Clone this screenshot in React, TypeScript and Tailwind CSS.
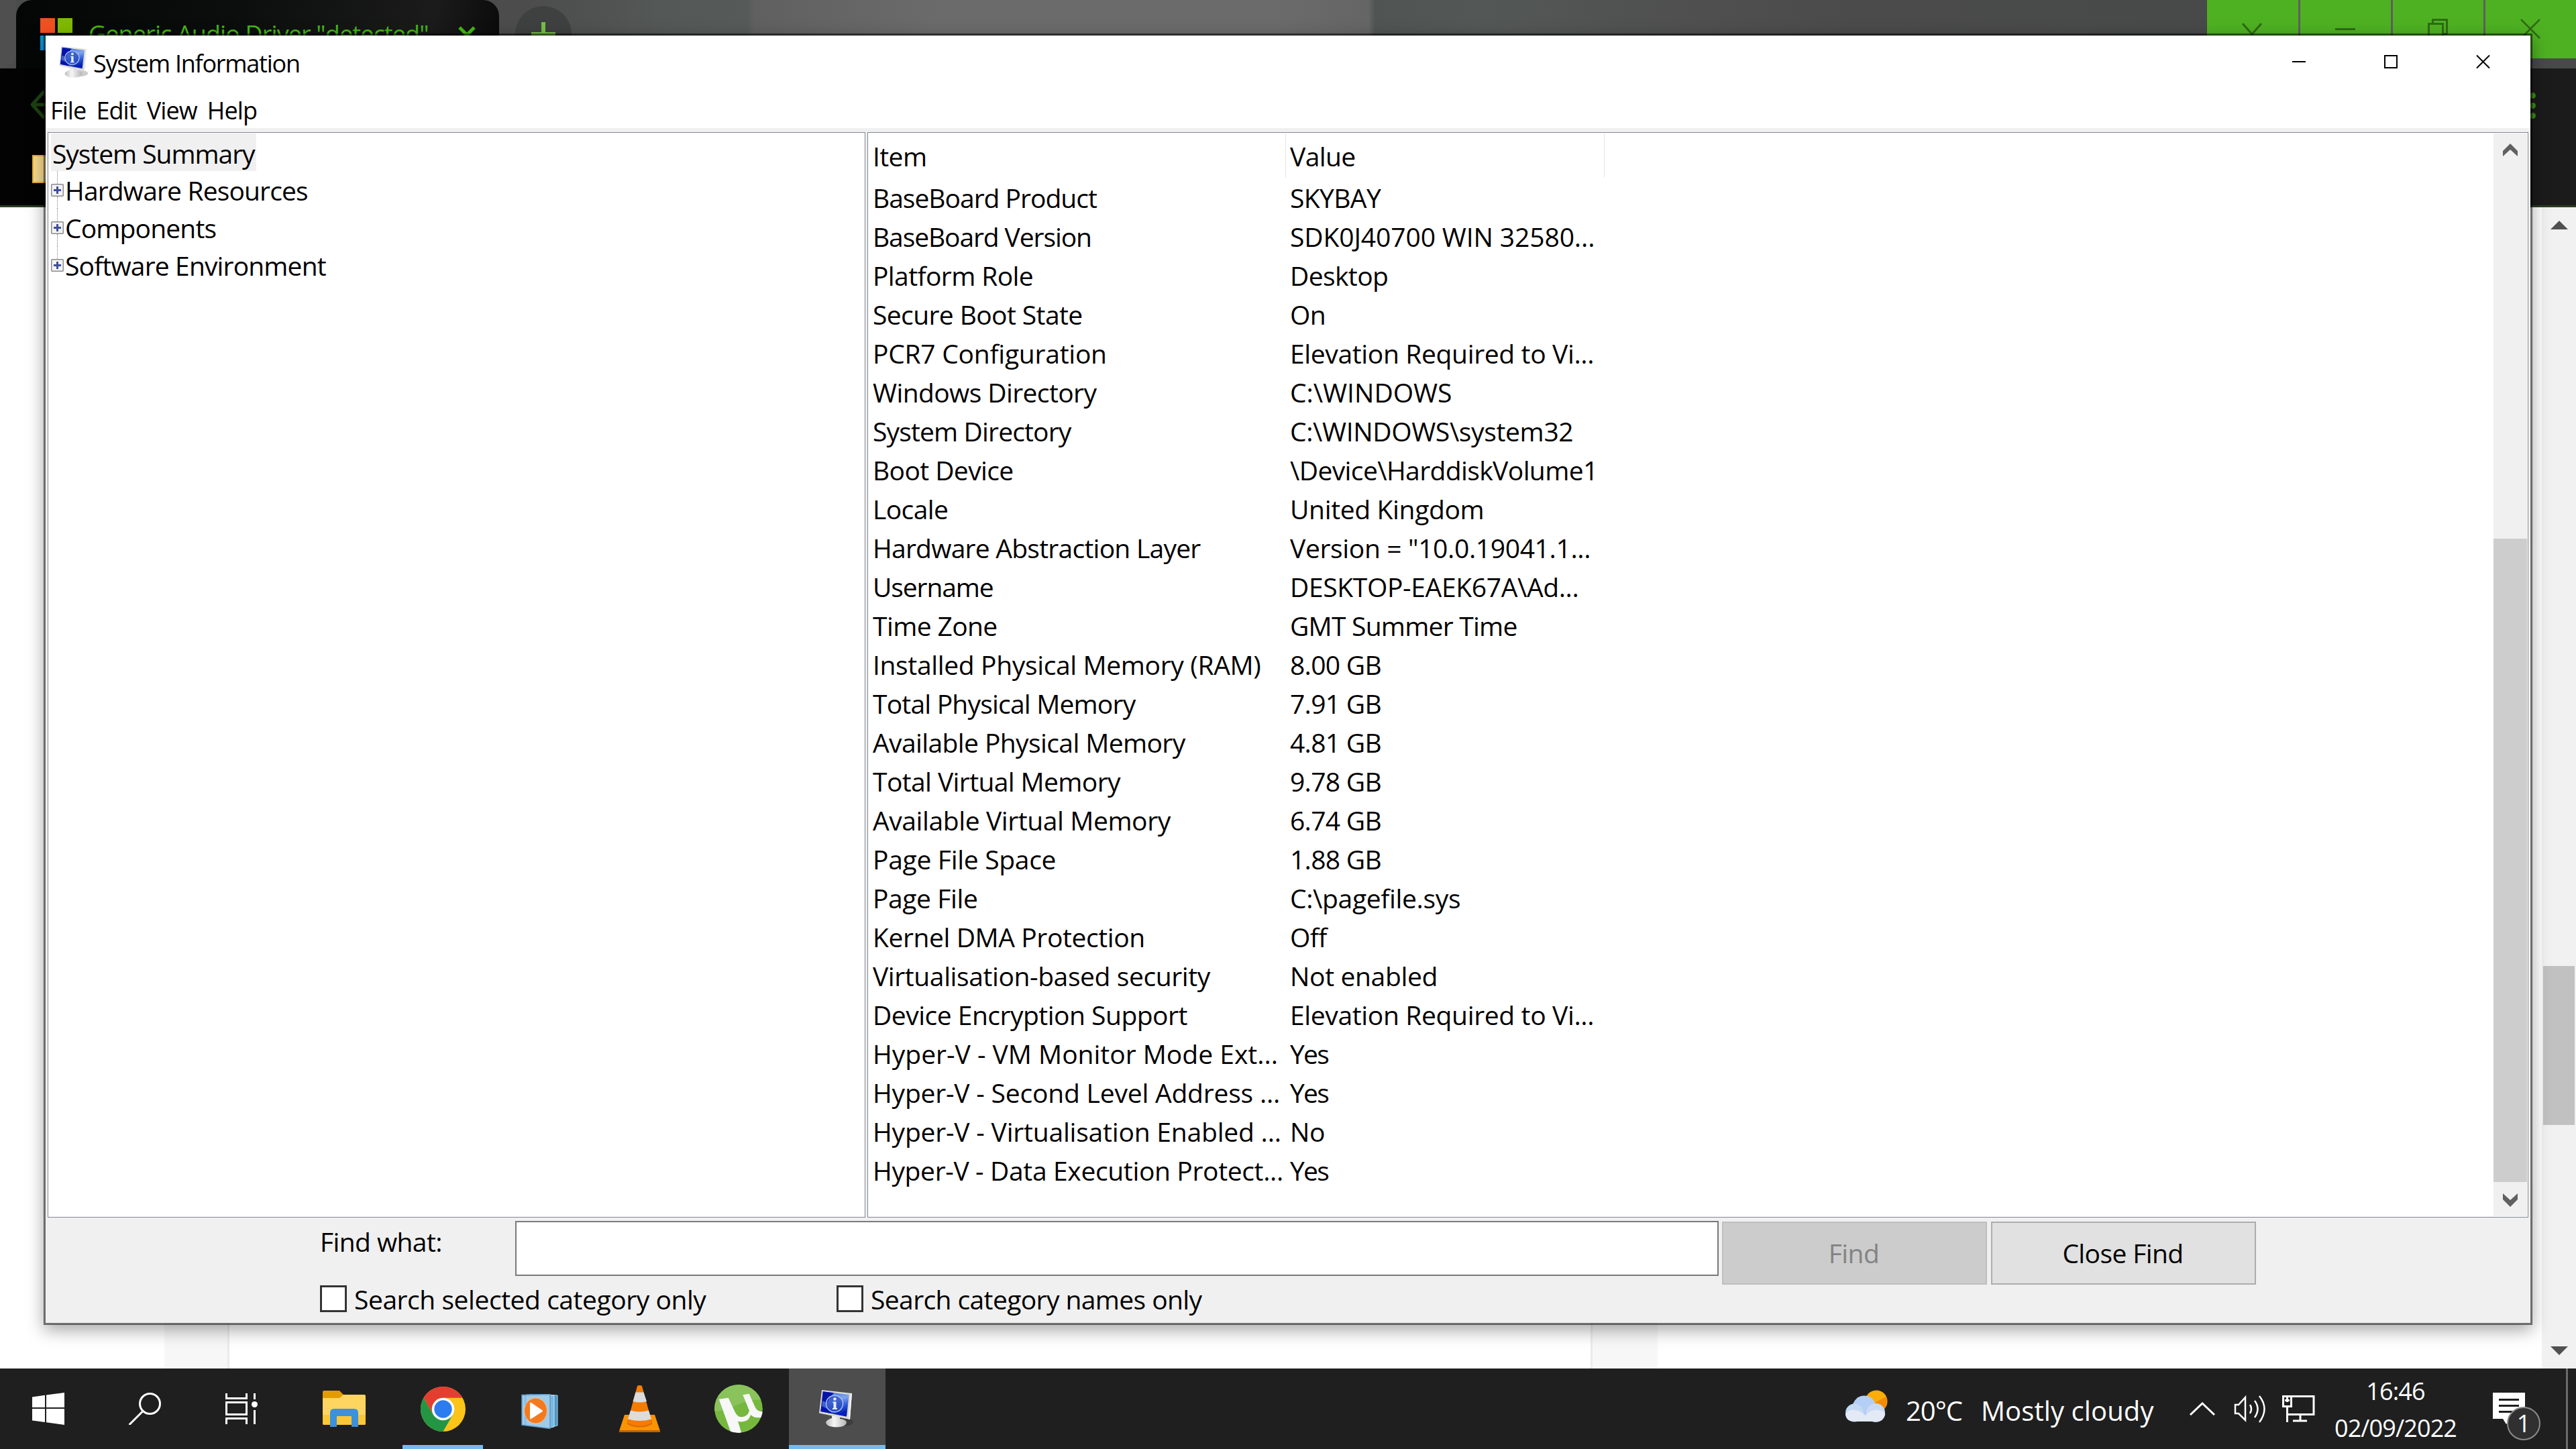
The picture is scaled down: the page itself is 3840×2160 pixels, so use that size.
import type { ReactNode } from 'react';

interface SystemItem {
    name: string;
    value: string;
    nameFit?: string;
    valueFit?: string;
}

const ITEMS: SystemItem[] = [
    { name: 'BaseBoard Product', value: 'SKYBAY', nameFit: 'tracking-[-1px]', valueFit: 'tracking-[-0.6px]' },
    { name: 'BaseBoard Version', value: 'SDK0J40700 WIN 32580...', nameFit: 'tracking-[-1.1px]', valueFit: 'tracking-[-0.1px]' },
    { name: 'Platform Role', value: 'Desktop', valueFit: 'tracking-[-0.6px]' },
    { name: 'Secure Boot State', value: 'On', valueFit: 'tracking-[-0.6px]' },
    { name: 'PCR7 Configuration', value: 'Elevation Required to Vi...', nameFit: 'tracking-[-0.25px]' },
    { name: 'Windows Directory', value: 'C:\\WINDOWS', valueFit: 'tracking-normal' },
    { name: 'System Directory', value: 'C:\\WINDOWS\\system32', nameFit: 'tracking-[-0.85px]' },
    { name: 'Boot Device', value: '\\Device\\HarddiskVolume1', valueFit: 'tracking-[-0.6px]' },
    { name: 'Locale', value: 'United Kingdom' },
    { name: 'Hardware Abstraction Layer', value: 'Version = "10.0.19041.1...', nameFit: 'tracking-[-0.75px]' },
    { name: 'Username', value: 'DESKTOP-EAEK67A\\Ad...', nameFit: 'tracking-[-1.1px]' },
    { name: 'Time Zone', value: 'GMT Summer Time', valueFit: 'tracking-[-0.75px]' },
    { name: 'Installed Physical Memory (RAM)', value: '8.00 GB', nameFit: 'tracking-[-0.35px]', valueFit: 'tracking-[-0.7px]' },
    { name: 'Total Physical Memory', value: '7.91 GB', nameFit: 'tracking-[-0.8px]', valueFit: 'tracking-[-0.7px]' },
    { name: 'Available Physical Memory', value: '4.81 GB', valueFit: 'tracking-[-0.7px]' },
    { name: 'Total Virtual Memory', value: '9.78 GB', valueFit: 'tracking-[-0.7px]' },
    { name: 'Available Virtual Memory', value: '6.74 GB', nameFit: 'tracking-[-0.4px]', valueFit: 'tracking-[-0.7px]' },
    { name: 'Page File Space', value: '1.88 GB', nameFit: 'tracking-[-0.3px]', valueFit: 'tracking-[-0.7px]' },
    { name: 'Page File', value: 'C:\\pagefile.sys', nameFit: 'tracking-[-0.4px]' },
    { name: 'Kernel DMA Protection', value: 'Off', nameFit: 'tracking-[-0.4px]', valueFit: 'tracking-[-0.6px]' },
    { name: 'Virtualisation-based security', value: 'Not enabled', nameFit: 'tracking-[-0.4px]' },
    { name: 'Device Encryption Support', value: 'Elevation Required to Vi...', nameFit: 'tracking-[-0.5px]' },
    { name: 'Hyper-V - VM Monitor Mode Ext...', value: 'Yes', nameFit: 'tracking-normal', valueFit: 'tracking-[-1.7px]' },
    { name: 'Hyper-V - Second Level Address ...', value: 'Yes', nameFit: 'tracking-[-0.2px]', valueFit: 'tracking-[-1.7px]' },
    { name: 'Hyper-V - Virtualisation Enabled ...', value: 'No', nameFit: 'tracking-[-0.2px]' },
    { name: 'Hyper-V - Data Execution Protect...', value: 'Yes', nameFit: 'tracking-[-0.35px]', valueFit: 'tracking-[-1.7px]' },
];

const CATEGORIES = ['Hardware Resources', 'Components', 'Software Environment'];

function SysInfoIcon({ className }: { className: string }) {
    return (
        <svg className={className} viewBox="0 0 52 56" preserveAspectRatio="none">
            <defs>
                <linearGradient id="screen" x1="0" y1="0" x2="0.3" y2="1">
                    <stop offset="0" stopColor="#2a5fd8" />
                    <stop offset="0.45" stopColor="#7fa6ee" />
                    <stop offset="0.7" stopColor="#3560d8" />
                    <stop offset="1" stopColor="#0420b8" />
                </linearGradient>
                <linearGradient id="stand" x1="0" y1="0" x2="1" y2="0">
                    <stop offset="0" stopColor="#bdbdbd" />
                    <stop offset="0.4" stopColor="#f6f6f6" />
                    <stop offset="1" stopColor="#b4b4b4" />
                </linearGradient>
            </defs>
            <ellipse cx="35" cy="48" rx="16" ry="6" fill="#000" opacity="0.2" />
            <path d="M19 37h12v6q10 1 10 6-2 6-15 6.500Q12 55 10 49q0-4 9-7z" fill="url(#stand)" />
            <path d="M4 0L49 5 46 44 0 34.500z" fill="#dddbd8" />
            <path d="M47 5l2 0-3 39-2-.5z" fill="#f4f4f4" />
            <path d="M5.700 2.200L44.700 7 41 39.700 2.300 31.900z" fill="url(#screen)" />
            <path d="M5.700 2.200L22 4.200 15 13 12 21 18 35 2.300 31.900z" fill="#0414a8" />
            <path d="M5 16l9 4-2 8-8-4z" fill="#5a80dc" opacity="0.7" />
            <ellipse cx="23" cy="20.500" rx="12.500" ry="12.200" fill="#2c4fc4" fillOpacity="0.75" stroke="#b3c3ee" strokeWidth="1.400" />
            <circle cx="23.500" cy="13.500" r="2.200" fill="#e6edff" />
            <path d="M20.500 17.500h5V27h1.500v2h-7v-2h1.500v-7.500h-1z" fill="#e6edff" />
        </svg>
    );
}

function Background() {
    return (
        <div className="flex h-[2040px] w-full flex-col bg-white">
            <div className="flex h-[102px] w-full bg-[linear-gradient(90deg,#4c4c4c_0,#4c4c4c_780px,#4f5050_860px,#545957_1000px,#565b59_1115px,#606060_1125px,#6b6b6b_1400px,#6b6b6b_1900px,#656565_2040px,#505452_2050px,#535856_2200px,#4f504f_2500px,#4a4b4a_2750px,#484a49_3290px)]">
                <div className="h-[102px] w-6 rounded-br-[24px] bg-[#4f4f4f]" />
                <div className="flex h-[102px] w-[720px] rounded-t-[24px] bg-[linear-gradient(100deg,#040606,#0c0d0d_45%,#1b1b1b_85%,#0a0a0a)] pl-9 pt-[27px]">
                    <div className="grid h-12 w-12 grid-cols-2 gap-1">
                        <div className="bg-[#f25022]" />
                        <div className="bg-[#7fba00]" />
                        <div className="bg-[#0a94dc]" />
                        <div className="bg-[#ffb900]" />
                    </div>
                    <span className="ml-[24px] mt-[-1px] w-[512px] whitespace-nowrap text-[36px] leading-[50px] tracking-[-0.9px] text-[#42b813]">
                        Generic Audio Driver "detected"
                    </span>
                    <svg className="ml-[39px] mt-[12px] size-[26px]" viewBox="0 0 26 26">
                        <path d="M2 2l22 22M24 2L2 24" stroke="#42b813" strokeWidth="5" />
                    </svg>
                </div>
                <div className="ml-[24px] mt-[9px] flex size-[84px] justify-center rounded-full bg-[#3e413f] pt-[24px]">
                    <svg className="size-9" viewBox="0 0 36 36">
                        <path d="M18 0v36M0 18h36" stroke="#77bf47" strokeWidth="6" />
                    </svg>
                </div>
                <div className="ml-auto flex h-[87px] gap-[3px] bg-[#5f5f5f] text-[#2f6b13]">
                    <div className="h-full w-[136px] bg-[#4eb122]">
                        <svg className="ml-[52px] mt-[34px] h-5 w-[30px]" viewBox="0 0 30 20">
                            <path d="M1 1l14 16L29 1" fill="none" stroke="currentColor" strokeWidth="3" />
                        </svg>
                    </div>
                    <div className="h-full w-[135px] bg-[#4eb122]">
                        <div className="ml-[52px] mt-[42px] h-[3px] w-[30px] bg-[#2f6b13]" />
                    </div>
                    <div className="h-full w-[135px] bg-[#4eb122]">
                        <svg className="ml-[52px] mt-[28px] size-[30px]" viewBox="0 0 30 30">
                            <path d="M1.500 7.500h21v21h-21zM7.500 7.500v-6h21v21h-6" fill="none" stroke="currentColor" strokeWidth="3" />
                        </svg>
                    </div>
                    <div className="h-full w-[135px] bg-[#4eb122]">
                        <svg className="ml-[52px] mt-[28px] size-[30px]" viewBox="0 0 30 30">
                            <path d="M1 1l28 28M29 1L1 29" stroke="currentColor" strokeWidth="2.500" />
                        </svg>
                    </div>
                </div>
            </div>
            <div className="flex h-[207px] w-full justify-between border-b-[3px] border-[#2b3d22] bg-[linear-gradient(90deg,#020302,#020302_40%,#1b1b1b_90%)]">
                <div className="flex flex-col pl-[48px]">
                    <svg className="-ml-[2px] mt-[33px] h-[42px] w-[42px]" viewBox="0 0 42 42">
                        <path d="M20 1L2 21l18 20M2 21h38" fill="none" stroke="#1d4312" strokeWidth="5" />
                    </svg>
                    <div className="mt-[54px] h-[42px] w-12 border-2 border-[#e5b030] bg-[#f9db8f]" />
                </div>
                <div className="mr-[60px] mt-[36px] flex flex-col gap-[6px]">
                    <div className="size-[9px] rounded-full bg-[#3c8a1a]" />
                    <div className="size-[9px] rounded-full bg-[#3c8a1a]" />
                    <div className="size-[9px] rounded-full bg-[#3c8a1a]" />
                </div>
            </div>
            <div className="flex flex-1">
                <div className="ml-[245px] w-[97px] border-r-[3px] border-[#ebebeb] bg-[#f7f7f7]" />
                <div className="w-[2029px]" />
                <div className="w-[100px] border-l-[3px] border-[#ebebeb] bg-[#f7f7f7]" />
                <div className="ml-auto flex w-[51px] flex-col items-center bg-[#f1f1f1] pt-[20px]">
                    <svg className="h-[13px] w-[26px]" viewBox="0 0 26 13">
                        <path d="M0 13L13 0l13 13z" fill="#505050" />
                    </svg>
                    <div className="mt-[1098px] h-[237px] w-[47px] bg-[#c1c1c1]" />
                    <svg className="mt-[330px] h-[13px] w-[26px]" viewBox="0 0 26 13">
                        <path d="M0 0l13 13L26 0z" fill="#505050" />
                    </svg>
                </div>
            </div>
        </div>
    );
}

function TitleBar() {
    return (
        <div className="flex h-[80px] items-start">
            <SysInfoIcon className="ml-[20px] mt-[16px] h-[47px] w-[44px]" />
            <span className="ml-[7px] mt-[12px] text-[36px] leading-[60px] tracking-[-1.25px]">System Information</span>
            <svg className="ml-auto mr-[58px] mt-[28px] h-[22px] w-[300px]" viewBox="0 0 300 22">
                <path d="M3 11h20" stroke="#000" strokeWidth="2" />
                <path d="M141 2h18v18h-18z" fill="none" stroke="#000" strokeWidth="2" />
                <path d="M278 1.500l19 19M297 1.500l-19 19" stroke="#000" strokeWidth="2" />
            </svg>
        </div>
    );
}

function TreePane() {
    return (
        <div className="h-[1618px] w-[1219px] border border-[#828790] bg-white pl-1 pt-px">
            <div className="h-14 w-[306px] whitespace-nowrap bg-[#f0f0f0] pl-[2px] pt-[2px] text-[39px] leading-[56px] tracking-[-1.05px]">
                System Summary
            </div>
            {CATEGORIES.map((name, i) => (
                <div key={name} className="flex h-14">
                    <div className="flex w-[19px] flex-col items-center">
                        <div className="h-[19px] border-l border-dotted border-[#808080]" />
                        <svg className="h-[19px] w-[19px] shrink-0" viewBox="0 0 19 19">
                            <rect x="0.750" y="0.750" width="17.500" height="17.500" rx="1" fill="#f3f3f3" stroke="#8c8c8c" strokeWidth="1.500" />
                            <path d="M4 9.500h11M9.500 4v11" stroke="#3f4f9b" strokeWidth="3" />
                        </svg>
                        {i < CATEGORIES.length - 1 && (
                            <div className="h-[18px] border-l border-dotted border-[#808080]" />
                        )}
                    </div>
                    <span className="ml-[2px] mt-px whitespace-nowrap text-[39px] leading-[56px] tracking-[-0.85px]">{name}</span>
                </div>
            ))}
        </div>
    );
}

function ListPane() {
    return (
        <div className="flex h-[1618px] w-[2476px] border border-[#828790] bg-white p-px">
            <div className="w-[2422px] text-[39px]">
                <div className="flex h-[66px] leading-[68px] tracking-[-0.6px]">
                    <div className="w-[622px] border-r border-[#e5e5e5] pl-[6px]">Item</div>
                    <div className="w-[475px] border-r border-[#e5e5e5] pl-[6px]">Value</div>
                </div>
                {ITEMS.map((item) => (
                    <div key={item.name} className="flex h-[58px] whitespace-nowrap leading-[60px]">
                        <span className={`w-[622px] pl-[6px] ${item.nameFit ?? 'tracking-[-0.6px]'}`}>{item.name}</span>
                        <span className={`pl-[6px] ${item.valueFit ?? 'tracking-[-0.35px]'}`}>{item.value}</span>
                    </div>
                ))}
            </div>
            <div className="flex w-[50px] flex-col items-center bg-[#f0f0f0]">
                <svg className="mt-[15px] h-[20px] w-[22px]" viewBox="0 0 22 20">
                    <path d="M0 11L11 0l11 11v8L11 9 0 19z" fill="#606060" />
                </svg>
                <div className="mt-[569px] h-[959px] w-full bg-[#cdcdcd]" />
                <svg className="mt-[17px] h-[20px] w-[22px]" viewBox="0 0 22 20">
                    <path d="M0 9l11 11L22 9V0L11 10 0 0z" fill="#606060" />
                </svg>
            </div>
        </div>
    );
}

function Checkbox({ label, className }: { label: string; className: string }) {
    return (
        <div className={className}>
            <div className="size-10 border-[3px] border-[#333] bg-white" />
            <span className="ml-[11px] mt-px whitespace-nowrap text-[39px] leading-[40px]">{label}</span>
        </div>
    );
}

function FindBar() {
    return (
        <div className="flex-1 pl-[409px] pt-[5px]">
            <div className="flex h-[96px] text-[39px] tracking-[-0.6px]">
                <span className="w-[291px] pt-[1px] leading-[60px]">Find what:</span>
                <div className="h-[82px] w-[1794px] border-2 border-[#7a7a7a] bg-white" />
                <div className="ml-[5px] mt-px h-[94px] w-[395px] border-2 border-[#bfbfbf] bg-[#ccc] pr-[2px] text-center leading-[90px] text-[#838383]">
                    Find
                </div>
                <div className="ml-[6px] mt-px h-[94px] w-[395px] border-2 border-[#adadad] bg-[#e1e1e1] pr-[2px] text-center leading-[90px]">
                    Close Find
                </div>
            </div>
            <div className="flex">
                <Checkbox label="Search selected category only" className="flex w-[770px] tracking-[-0.45px]" />
                <Checkbox label="Search category names only" className="flex tracking-[-0.6px]" />
            </div>
        </div>
    );
}

function TaskButton({ children, className = '' }: { children?: ReactNode; className?: string }) {
    return <div className={`flex h-[120px] w-[144px] items-center justify-center ${className}`}>{children}</div>;
}

function ChromeIcon() {
    return (
        <svg className="size-[67px]" viewBox="0 0 66 66">
            <circle cx="33" cy="33" r="33" fill="#fcc419" />
            <path d="M4.400 16.500A33 33 0 0 1 61.600 16.500H33L18.700 41.200z" fill="#e43e30" />
            <path d="M4.400 16.500A33 33 0 0 0 33 66L47.300 41.200H18.700z" fill="#249643" />
            <circle cx="33" cy="33" r="16.500" fill="#fff" />
            <circle cx="33" cy="33" r="13" fill="#2b7def" />
        </svg>
    );
}

function Taskbar() {
    return (
        <div className="flex h-[120px] w-full bg-[#1f1f1f] text-white">
            <TaskButton>
                <svg className="size-12" viewBox="0 0 48 48">
                    <path d="M0 6.500l19-2.700V22H0zM21 3.500L48 0v22H21zM0 24h19v20L0 41.500zM21 24h27v24l-27-3.700z" fill="#fff" />
                </svg>
            </TaskButton>
            <TaskButton>
                <svg className="size-12" viewBox="0 0 48 48">
                    <circle cx="31.500" cy="16.500" r="15" fill="none" stroke="#fff" strokeWidth="3" />
                    <path d="M21 27.500L1.500 47" stroke="#fff" strokeWidth="3" strokeLinecap="round" />
                </svg>
            </TaskButton>
            <TaskButton>
                <svg className="h-[46px] w-12" viewBox="0 0 48 46">
                    <path d="M1.500 0v7.500h30V0M1.500 13.500h30v18h-30zM1.500 46v-8.500h30V46" fill="none" stroke="#fff" strokeWidth="3" />
                    <path d="M43.500 0v9M43.500 25v21" stroke="#fff" strokeWidth="3" />
                    <circle cx="43.500" cy="16.500" r="4.500" fill="#fff" />
                </svg>
            </TaskButton>
            <TaskButton className="pl-[18px]">
                <svg className="h-[54px] w-16" viewBox="0 0 64 54">
                    <path d="M0 2q0-2 2-2h23l6 6v8H0z" fill="#e39b00" />
                    <path d="M0 11h25l6-5h31q2 0 2 2v41q0 2-2 2H2q-2 0-2-2z" fill="#ffd562" />
                    <path d="M0 36h64v13q0 2-2 2H2q-2 0-2-2z" fill="#fbc736" />
                    <path d="M11 54V33q0-6 6-6h30q6 0 6 6v21H43V38H21v16z" fill="#3b91de" />
                </svg>
            </TaskButton>
            <div className="ml-6 flex h-[120px] w-[120px] flex-col items-center border-b-[6px] border-[#76b9ed] pt-[27px]">
                <ChromeIcon />
            </div>
            <TaskButton className="ml-3">
                <svg className="mt-2 h-[52px] w-[55px]" viewBox="0 0 55 52">
                    <path d="M12 1l42 1v45l-8 2z" fill="#4e94c4" stroke="#a9d6f2" />
                    <path d="M8 1l41 1v47l-5 1z" fill="#79b7df" stroke="#c4e4f7" />
                    <path d="M1 1.500L43 .5v51L1 46z" fill="#9fcbea" stroke="#5c9ccb" strokeWidth="1.500" />
                    <path d="M6 2v44" stroke="#6ba6d0" />
                    <ellipse cx="21.500" cy="25" rx="17" ry="19" fill="#f47a20" stroke="#fbc08e" />
                    <path d="M13 14q0-2 2-1l16 11q2 1 0 2.500L15 37q-2 1-2-1z" fill="#fff" />
                </svg>
            </TaskButton>
            <TaskButton className="ml-[5px]">
                <svg className="h-[70px] w-[61px]" viewBox="0 0 61 70">
                    <path d="M8 44h45l8 24q0 2-2 2H2q-2 0-2-2z" fill="#fb9400" />
                    <path d="M0 67h61v3H0z" fill="#bd6400" />
                    <path d="M12 52q18 9 37 0v6q-18 9-37 0z" fill="#d06800" />
                    <path d="M27 1q3.500-2 7 0l15 55q-18 10-37 0z" fill="#f47c00" />
                    <path d="M24.500 10.500h12L41 24q-10 3-20.500 0zM17 37.500q13 4 27 0l4 13q-17 5-35 0z" fill="#dcdcdc" />
                </svg>
            </TaskButton>
            <TaskButton className="ml-[4px]">
                <svg className="size-[72px]" viewBox="0 0 72 72">
                    <defs>
                        <clipPath id="disc">
                            <circle cx="36" cy="36" r="36" />
                        </clipPath>
                    </defs>
                    <g clipPath="url(#disc)">
                        <circle cx="36" cy="36" r="36" fill="#76b83f" />
                        <path d="M0 0h72v22Q50 22 30 32 12 40 0 40z" fill="#8ac35c" />
                        <path
                            d="M6.700 21.700l14-2 10 21.300q4 8 11 7.300 8-1 10.300-9.300L42.300 15.300l9.400-1.600L61 34.300q3 6 11 6v8q-12 3-18-3.300-2 7-7 9-6 2.500-12 .7l5.500 18H25z"
                            fill="#f7f7f7"
                        />
                    </g>
                </svg>
            </TaskButton>
            <TaskButton className="ml-[3px] border-b-[6px] border-[#76b9ed] bg-[#4d4d4d]">
                <SysInfoIcon className="ml-[-2px] mt-[6px] h-[56px] w-[52px]" />
            </TaskButton>

            <div className="ml-auto flex h-full items-center">
                <svg className="mt-[-8px] h-12 w-[66px]" viewBox="0 0 66 48">
                    <circle cx="47" cy="17" r="16.500" fill="#fbad0a" />
                    <path d="M34 24L62 10q3 12-6 22-12 2-22-8z" fill="#f58a06" />
                    <circle cx="29" cy="26" r="17.500" fill="#b4cff5" />
                    <circle cx="14.500" cy="34" r="13.500" fill="#c3daf3" />
                    <circle cx="46" cy="34" r="14" fill="#c9daf2" />
                    <path d="M1 36q5-8 16-6 8 2 14 8 8-10 20-8 10 2 9 7-2 10-13 10H14Q2 47 1 36z" fill="#e3eaf6" />
                </svg>
                <span className="ml-[25px] mt-[5px] w-[112px] whitespace-nowrap text-[40px] leading-none tracking-[-1px]">20°C</span>
                <span className="mt-[5px] w-[311px] whitespace-nowrap text-[40px] leading-none tracking-[0.1px]">Mostly cloudy</span>
                <svg className="h-5 w-[38px]" viewBox="0 0 38 20">
                    <path d="M1 19L19 2l18 17" fill="none" stroke="#fff" strokeWidth="3" />
                </svg>
                <svg className="ml-[28px] h-[42px] w-[50px]" viewBox="0 0 50 42" fill="none" stroke="#fff" strokeWidth="2.500">
                    <path d="M2 15h5L17 4v34L7 28H2z" />
                    <path d="M24 15q4 6 0 13M31 9q9 12 0 25M38 2q15 19 0 39" />
                </svg>
                <svg className="ml-[22px] h-[40px] w-[50px]" viewBox="0 0 50 40" fill="none" stroke="#fff" strokeWidth="3">
                    <path d="M14 1.500h33v27H9M27 28v10M16 38h21M1.500 1.500h12v15h-12zM7.500 17v23M4 7.500h7M7.500 2v8" />
                </svg>
                <div className="ml-[24px] mt-[2px] w-[190px] text-center text-[36px] leading-[55px] tracking-[-0.9px]">
                    <div>16:46</div>
                    <div>02/09/2022</div>
                </div>
                <div className="relative ml-[50px] h-[72px] w-[72px]">
                    <svg className="mt-[12px] h-[48px] w-[48px]" viewBox="0 0 48 48">
                        <path d="M0 0h48v39H27l-7 8-5-8H0z" fill="#fff" />
                        <path d="M9 10.500h30M9 19.500h30M9 28.500h30" stroke="#1f1f1f" strokeWidth="3" />
                    </svg>
                    <span className="absolute left-[21px] top-[33px] flex size-[50px] items-center justify-center rounded-full border-2 border-[#8c8c8c] bg-[#303030] text-[36px] leading-none">
                        1
                    </span>
                </div>
                <div className="ml-[37px] mr-[12px] h-full w-[3px] bg-[#6b6b6b]" />
            </div>
        </div>
    );
}

export default function App() {
    return (
        <div className="relative h-[2160px] w-[3840px] overflow-hidden font-['Open_Sans',sans-serif] text-black">
            <Background />
            <Taskbar />

            {/* System Information window */}
            <div className="absolute left-[65px] top-[50px] flex h-[1925px] w-[3710px] flex-col border-[3px] border-[#000]/55 bg-[#f0f0f0] bg-clip-padding shadow-[0_8px_24px_rgba(0,0,0,0.35)]">
                <div className="h-[138px] bg-white">
                    <TitleBar />
                    <div className="flex gap-[15px] pl-[7px] pt-[2px] text-[36px] leading-[60px] tracking-[-0.9px]">
                        <span>File</span>
                        <span>Edit</span>
                        <span>View</span>
                        <span>Help</span>
                    </div>
                </div>
                <div className="flex gap-[3px] pl-[3px] pt-[6px]">
                    <TreePane />
                    <ListPane />
                </div>
                <FindBar />
            </div>
        </div>
    );
}
